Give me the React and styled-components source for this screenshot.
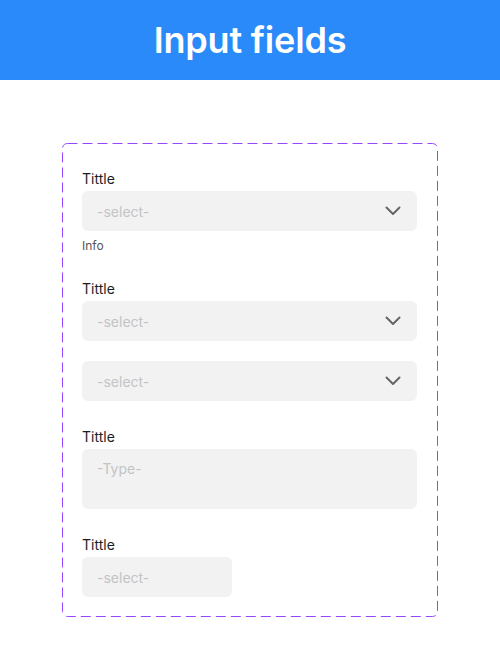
import React from "react";
import styled, { createGlobalStyle } from "styled-components";

const Global = createGlobalStyle`
  html, body { margin: 0; padding: 0; background: #ffffff; }
  body { font-family: Inter, "Noto Sans", sans-serif; -webkit-font-smoothing: antialiased; }
  * { box-sizing: border-box; }
`;

const dashed = encodeURIComponent(
  `<svg xmlns="http://www.w3.org/2000/svg" width="376" height="474"><rect x="0.5" y="0.5" width="375" height="473" rx="5" ry="5" fill="none" stroke="#9747FF" stroke-width="1" stroke-dasharray="10 5"/></svg>`
);

const Page = styled.div`
  width: 500px;
  min-height: 651px;
  background: #fff;
`;

const Header = styled.header`
  height: 80px;
  background: #2a8af9;
  display: flex;
  align-items: center;
  justify-content: center;
`;

const Title = styled.h1`
  margin: 0;
  font-family: Inter, sans-serif;
  font-weight: 600;
  font-size: 36px;
  line-height: 44px;
  color: #ffffff;
  letter-spacing: -0.2px;
`;

const Main = styled.main`
  padding-top: 63px;
  display: flex;
  justify-content: center;
`;

const Frame = styled.div`
  width: 376px;
  height: 474px;
  background-image: url("data:image/svg+xml,${dashed}");
  background-repeat: no-repeat;
  padding: 27px 20px 19px 20px;
  display: flex;
  flex-direction: column;
  gap: 27px;
`;

const Group = styled.div`
  display: flex;
  flex-direction: column;
`;

const Stack = styled.div`
  display: flex;
  flex-direction: column;
  gap: 20px;
`;

const Label = styled.div`
  font-size: 14px;
  line-height: 17px;
  color: #1e1e1e;
  margin-bottom: 4px;
`;

const Info = styled.div`
  font-size: 12px;
  line-height: 15px;
  color: #555555;
  margin-top: 7px;
`;

const Field = styled.div`
  width: ${(p) => (p.$narrow ? "150px" : "335px")};
  height: ${(p) => (p.$tall ? "60px" : "40px")};
  background: #f2f2f2;
  border-radius: 6px;
  display: flex;
  align-items: ${(p) => (p.$tall ? "flex-start" : "center")};
  justify-content: space-between;
  padding: ${(p) => (p.$tall ? "11px 16px 0 15px" : "0 16px 0 15px")};
`;

const Placeholder = styled.span`
  font-size: 14px;
  line-height: 17px;
  color: #c4c4c4;
`;

const Chevron = () => (
  <svg width="16" height="10" viewBox="0 0 16 10" fill="none">
    <polyline
      points="1.5,1.5 8,8 14.5,1.5"
      stroke="#666666"
      strokeWidth="2"
      strokeLinecap="round"
      strokeLinejoin="round"
    />
  </svg>
);

const Select = ({ narrow, chevron = true }) => (
  <Field $narrow={narrow}>
    <Placeholder>-select-</Placeholder>
    {chevron && <Chevron />}
  </Field>
);

export default function App() {
  return (
    <Page>
      <Global />
      <Header>
        <Title>Input fields</Title>
      </Header>
      <Main>
        <Frame>
          <Group>
            <Label>Tittle</Label>
            <Select />
            <Info>Info</Info>
          </Group>
          <Group>
            <Label>Tittle</Label>
            <Stack>
              <Select />
              <Select />
            </Stack>
          </Group>
          <Group>
            <Label>Tittle</Label>
            <Field $tall>
              <Placeholder>-Type-</Placeholder>
            </Field>
          </Group>
          <Group>
            <Label>Tittle</Label>
            <Select narrow chevron={false} />
          </Group>
        </Frame>
      </Main>
    </Page>
  );
}
